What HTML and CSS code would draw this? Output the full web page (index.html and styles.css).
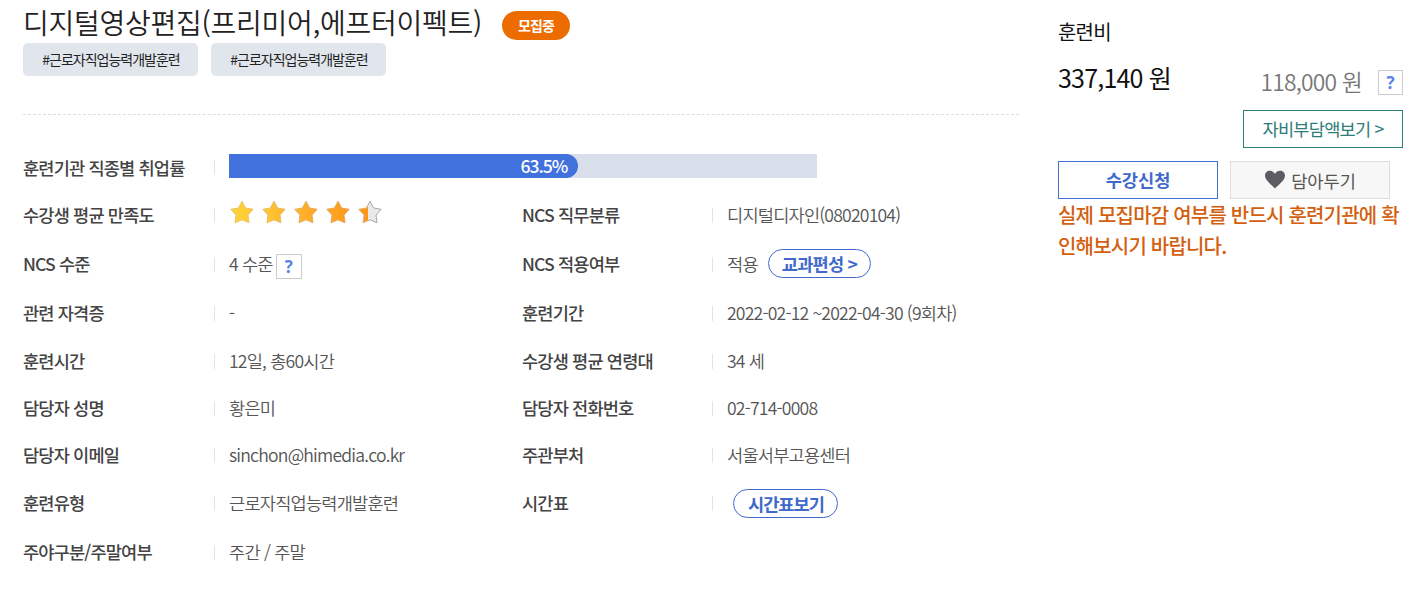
FILE: index.html
```html
<!DOCTYPE html>
<html lang="ko">
<head>
  <meta charset="UTF-8" />
  <meta name="viewport" content="width=device-width, initial-scale=1.0" />
  <title>디지털영상편집(프리미어,에프터이펙트)</title>
  <link rel="stylesheet" href="styles.css">
</head>
<body>

  <!-- 과정 정보 -->
  <main class="course">
    <div class="title-row">
      <h1>디지털영상편집(프리미어,에프터이펙트)</h1>
      <span class="status">모집중</span>
    </div>
    <div class="tags">
      <span class="tag">#근로자직업능력개발훈련</span>
      <span class="tag">#근로자직업능력개발훈련</span>
    </div>

    <dl class="info">
      <dt class="first">훈련기관 직종별 취업률</dt>
      <dd class="wide">
        <div class="progress"><div class="progress-bar"><span>63.5%</span></div></div>
      </dd>

      <dt>수강생 평균 만족도</dt>
      <dd>
        <svg class="stars" width="156" height="26" viewBox="0 0 156 26">
          <defs>
            <path id="star" d="M12 1.2 L15.6 8 L23.2 9.3 L18 15 L19 22.8 L12 19.8 L5 22.8 L6 15 L0.8 9.3 L8.4 8 Z" stroke-linejoin="round" />
            <linearGradient id="g1"><stop offset="0" stop-color="#ffd53c" /><stop offset="1" stop-color="#ffc72e" /></linearGradient>
            <linearGradient id="g2"><stop offset="0" stop-color="#ffc936" /><stop offset="1" stop-color="#ffb52c" /></linearGradient>
            <linearGradient id="g3"><stop offset="0" stop-color="#ffb62d" /><stop offset="1" stop-color="#ffa423" /></linearGradient>
            <linearGradient id="g4"><stop offset="0" stop-color="#ffa622" /><stop offset="1" stop-color="#ff981b" /></linearGradient>
            <linearGradient id="g5"><stop offset="0.42" stop-color="#fd961b" /><stop offset="0.42" stop-color="#e9e9e9" /></linearGradient>
            <linearGradient id="edge"><stop offset="0.42" stop-color="#e0b27c" /><stop offset="0.42" stop-color="#a8a8a8" /></linearGradient>
          </defs>
          <use href="#star" x="1" y="1" fill="url(#g1)" stroke="#e6c66c" />
          <use href="#star" x="33" y="1" fill="url(#g2)" stroke="#e6bc66" />
          <use href="#star" x="65" y="1" fill="url(#g3)" stroke="#e6b060" />
          <use href="#star" x="97" y="1" fill="url(#g4)" stroke="#e6a85c" />
          <use href="#star" x="129" y="1" fill="url(#g5)" stroke="url(#edge)" />
        </svg>
      </dd>
      <dt>NCS 직무분류</dt>
      <dd>디지털디자인(08020104)</dd>

      <dt>NCS 수준</dt>
      <dd>4 수준<button class="help">?</button></dd>
      <dt>NCS 적용여부</dt>
      <dd>적용<a class="pill">교과편성 &gt;</a></dd>

      <dt>관련 자격증</dt>
      <dd>-</dd>
      <dt>훈련기간</dt>
      <dd>2022-02-12 ~2022-04-30 (9회차)</dd>

      <dt>훈련시간</dt>
      <dd>12일, 총60시간</dd>
      <dt>수강생 평균 연령대</dt>
      <dd>34 세</dd>

      <dt>담당자 성명</dt>
      <dd>황은미</dd>
      <dt>담당자 전화번호</dt>
      <dd>02-714-0008</dd>

      <dt>담당자 이메일</dt>
      <dd>sinchon@himedia.co.kr</dd>
      <dt>주관부처</dt>
      <dd>서울서부고용센터</dd>

      <dt>훈련유형</dt>
      <dd>근로자직업능력개발훈련</dd>
      <dt>시간표</dt>
      <dd><a class="pill timetable">시간표보기</a></dd>

      <dt>주야구분/주말여부</dt>
      <dd>주간 / 주말</dd>
    </dl>
  </main>

  <!-- 훈련비 -->
  <aside class="fee">
    <h2>훈련비</h2>
    <div class="price-row">
      <strong class="price">337,140 원</strong>
      <span class="self-price">118,000 원</span>
      <button class="help">?</button>
    </div>
    <a class="btn self-btn">자비부담액보기 &gt;</a>
    <div class="btn-row">
      <a class="btn apply">수강신청</a>
      <a class="btn keep">
        <svg width="22" height="19" viewBox="0 0 22 19"><path d="M11 18.5 C8 15 1 10.5 1 5.8 C1 2.8 3.2 0.8 5.8 0.8 C8.2 0.8 10 2 11 4 C12 2 13.8 0.8 16.2 0.8 C18.8 0.8 21 2.8 21 5.8 C21 10.5 14 15 11 18.5 Z" fill="#5c5c62" /></svg>
        <span>담아두기</span>
      </a>
    </div>
    <p class="notice">실제 모집마감 여부를 반드시 훈련기관에 확인해보시기 바랍니다.</p>
  </aside>

</body>
</html>
```
FILE: styles.css
```css
* {
  box-sizing: border-box;
}
body {
  margin: 0;
  height: 603px;
  display: flex;
  background-color: #fff;
  color: #555;
  font-family: "Noto Sans CJK KR", sans-serif;
  font-size: 17.6px;
  letter-spacing: -0.8px;
  line-height: 30px;
  overflow: hidden;
}
.course {
  width: 996px;
  margin-left: 23px;
}
.title-row {
  display: flex;
  height: 43px;
}
h1 {
  margin: 0;
  color: #222;
  font-size: 28px;
  font-weight: 350;
  line-height: 45px;
  letter-spacing: -0.25px;
}
.status {
  width: 68px;
  height: 29px;
  margin: 11px 0 0 20px;
  border-radius: 15px;
  background-color: #ed6c00;
  color: #fff;
  font-size: 14px;
  font-weight: 700;
  line-height: 28px;
  text-align: center;
}
.tags {
  display: flex;
  gap: 13px;
  height: 72px;
  border-bottom: 1px dashed #ddd;
}
.tag {
  width: 175px;
  height: 33px;
  padding-left: 1px;
  border-radius: 5px;
  background-color: #e1e6ed;
  color: #222;
  font-size: 14px;
  letter-spacing: -1px;
  line-height: 33px;
  text-align: center;
}

/* 과정 상세 */
.info {
  display: grid;
  grid-template-columns: 191px 308px 190px 307px;
  grid-template-rows: 47px 48px 50px 48px 48px 46px 48px 48px 50px;
  align-items: center;
  margin: 29px 0 0;
}
dt {
  color: #444;
  font-weight: 500;
  letter-spacing: -0.85px;
  padding-bottom: 1px;
}
.first {
  padding: 1px 0 0;
}
dd {
  display: flex;
  align-items: center;
  margin: 0;
  padding-bottom: 1px;
  font-weight: 350;
  white-space: nowrap;
}
dd::before {
  content: "";
  width: 1px;
  height: 15px;
  margin: 1px 14px 0 0;
  background-color: #e3e3e3;
}
.wide {
  grid-column: 2 / 5;
}
.progress {
  width: 588px;
  height: 24px;
  margin-top: -2px;
  background-color: #d8dfeb;
}
.progress-bar {
  width: calc(63.5% - 24px);
  height: 24px;
  padding-right: 11px;
  border-radius: 0 12px 12px 0;
  background-color: #4171dd;
  color: #fff;
  font-weight: 500;
  letter-spacing: -1px;
  line-height: 24px;
  text-align: right;
}
.stars {
  margin-top: -5px;
}
.help {
  width: 26px;
  height: 25px;
  padding: 0;
  border: 1px solid #ccc;
  background-color: #fff;
  color: #5b82e8;
  font-family: "Open Sans", sans-serif;
  font-size: 17px;
  font-weight: 700;
  line-height: 23px;
}
dd .help {
  margin: 5px 0 0 3px;
}
.pill {
  height: 29px;
  margin-left: 10px;
  padding: 0 13px;
  border: 1px solid #4169cc;
  border-radius: 15px;
  color: #4169cc;
  font-weight: 700;
  line-height: 27px;
}
.timetable {
  width: 105px;
  margin: 1px 0 0 6px;
  padding: 0 14px;
  letter-spacing: -1px;
}

/* 훈련비 영역 */
.fee {
  width: 345px;
  margin-left: 39px;
}
h2 {
  margin: 17px 0 0;
  color: #111;
  font-size: 20px;
  font-weight: 400;
}
.price-row {
  display: flex;
  height: 63px;
  color: #111;
}
.price {
  flex: 1;
  font-size: 25px;
  font-weight: 400;
  line-height: 61px;
}
.self-price {
  color: #777;
  font-size: 22.8px;
  font-weight: 350;
  line-height: 69px;
}
.price-row .help {
  width: 25px;
  margin: 23px 0 0 16px;
}
.btn {
  display: flex;
  align-items: center;
  justify-content: center;
  width: 160px;
  height: 38px;
  padding-bottom: 1px;
  border: 1px solid #4171cc;
}
.self-btn {
  margin-left: auto;
  border-color: #2e7d78;
  color: #2e7d78;
}
.btn-row {
  display: flex;
  gap: 12px;
  margin-top: 13px;
}
.apply {
  color: #4169cc;
  font-weight: 700;
  letter-spacing: 0;
}
.keep {
  gap: 5px;
  border-color: #ddd;
  background-color: #f7f7f7;
  letter-spacing: 0;
}
.keep span {
  padding-top: 2px;
}
.notice {
  margin: 0;
  padding-top: 1px;
  color: #d4600f;
  font-size: 20px;
  font-weight: 500;
  line-height: 30.5px;
  word-break: break-all;
}
```
